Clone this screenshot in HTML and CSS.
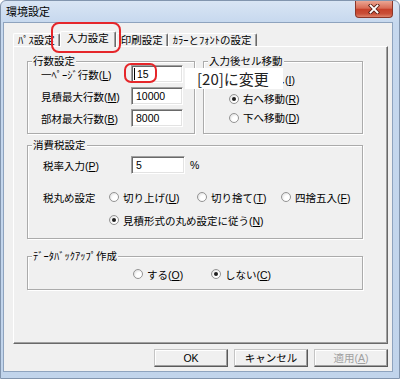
FILE: index.html
```html
<!DOCTYPE html>
<html lang="ja">
<head>
  <meta charset="UTF-8">
  <title>環境設定</title>
  <link rel="stylesheet" href="styles.css">
</head>
<body>
  <div class="window">

    <!-- title bar -->
    <div class="titlebar">
      <span class="title">環境設定</span>
      <span class="close">
        <svg width="12" height="10" viewBox="0 0 12 10">
          <path d="M2.5 1.5 L9.5 8.5 M9.5 1.5 L2.5 8.5" stroke="#5b2219" stroke-width="3.6" stroke-linecap="square"/>
          <path d="M2.5 1.5 L9.5 8.5 M9.5 1.5 L2.5 8.5" stroke="#fff" stroke-width="1.8" stroke-linecap="square"/>
        </svg>
      </span>
    </div>

    <div class="client">
      <div class="tabs">
        <div class="tab">ﾊﾟｽ設定</div>
        <div class="tab selected">入力設定</div>
        <div class="tab">印刷設定</div>
        <div class="tab">ｶﾗｰとﾌｫﾝﾄの設定</div>
      </div>

      <div class="panel">
        <div class="top-row">
          <fieldset class="group lines">
            <legend>行数設定</legend>
            <div class="group-body">
              <div class="field-row">
                <span class="label">一ﾍﾟｰｼﾞ行数(<u>L</u>)</span>
                <span class="field"><span class="caret"></span>15</span>
              </div>
              <div class="field-row">
                <span class="label">見積最大行数(<u>M</u>)</span>
                <span class="field">10000</span>
              </div>
              <div class="field-row">
                <span class="label">部材最大行数(<u>B</u>)</span>
                <span class="field">8000</span>
              </div>
            </div>
          </fieldset>

          <fieldset class="group move">
            <legend>入力後セル移動</legend>
            <div class="group-body">
              <div class="radio-row"><span class="option"><span class="dot"></span><span>移動なし(<u>I</u>)</span></span></div>
              <div class="radio-row"><span class="option"><span class="dot on"></span><span>右へ移動(<u>R</u>)</span></span></div>
              <div class="radio-row"><span class="option"><span class="dot"></span><span>下へ移動(<u>D</u>)</span></span></div>
            </div>
          </fieldset>
        </div>

        <fieldset class="group tax">
          <legend>消費税設定</legend>
          <div class="group-body">
            <div class="field-row">
              <span class="label">税率入力(<u>P</u>)</span>
              <span class="field">5</span>
              <span class="unit">%</span>
            </div>
            <div class="radio-row round">
              <span class="label">税丸め設定</span>
              <div class="choices">
                <span class="option"><span class="dot"></span><span>切り上げ(<u>U</u>)</span></span>
                <span class="option"><span class="dot"></span><span>切り捨て(<u>T</u>)</span></span>
                <span class="option"><span class="dot"></span><span>四捨五入(<u>F</u>)</span></span>
              </div>
            </div>
            <div class="radio-row follow">
              <span class="option"><span class="dot on"></span><span>見積形式の丸め設定に従う(<u>N</u>)</span></span>
            </div>
          </div>
        </fieldset>

        <fieldset class="group backup">
          <legend>ﾃﾞｰﾀﾊﾞｯｸｱｯﾌﾟ作成</legend>
          <div class="group-body">
            <div class="radio-row">
              <span class="option first"><span class="dot"></span><span>する(<u>O</u>)</span></span>
              <span class="option"><span class="dot on"></span><span>しない(<u>C</u>)</span></span>
            </div>
          </div>
        </fieldset>
      </div>

      <div class="buttons">
        <span class="button">OK</span>
        <span class="button">キャンセル</span>
        <span class="button disabled">適用(<u>A</u>)</span>
      </div>
    </div>

    <!-- annotations -->
    <div class="mark mark-tab"></div>
    <div class="mark mark-field"></div>
    <div class="note">[20]に変更</div>
  </div>
</body>
</html>
```

FILE: styles.css
```css
body {
  margin: 0;
  font-family: "Liberation Sans", "Noto Sans CJK JP", sans-serif;
  font-size: 10.5px;
  color: #000;
  background: #fff;
}

.window {
  position: relative;
  width: 400px;
  height: 379px;
  box-sizing: border-box;
  border: 1px solid #8295ae;
  border-radius: 6px 6px 0 0;
  background: linear-gradient(#d9e5f4, #c6d8ee 22px, #c1d4eb);
  display: flex;
  flex-direction: column;
}

/* title bar */
.titlebar {
  height: 21px;
  display: flex;
  justify-content: space-between;
  align-items: flex-start;
}

.title {
  padding-left: 5px;
  font-size: 11px;
  line-height: 22px;
}

.close {
  width: 38px;
  height: 17px;
  margin-right: 6px;
  box-sizing: border-box;
  border: 1px solid #8c3628;
  border-top: none;
  border-radius: 0 0 4px 4px;
  background: linear-gradient(#eba693, #d86b55 45%, #c6412a 52%, #c94f38 80%, #de836b);
  display: flex;
  align-items: center;
  justify-content: center;
}

.client {
  flex: 1;
  margin: 0 6px 6px 2px;
  border: 1px solid #8ea3be;
  background: #f0f0f0;
  padding: 8px 4px 4px 9px;
  display: flex;
  flex-direction: column;
}

/* tabs */
.tabs {
  display: flex;
  align-items: flex-end;
  height: 15px;
}

.tab {
  height: 13px;
  box-sizing: border-box;
  padding: 0 4px;
  border: 1px solid #fff;
  border-right-color: #696969;
  border-bottom: none;
  border-radius: 2px 2px 0 0;
  box-shadow: inset -1px 0 #a0a0a0;
  line-height: 12px;
  white-space: nowrap;
}

.tab.selected {
  height: 16px;
  padding: 0 6px;
  margin-bottom: -1px;
  background: #f0f0f0;
  z-index: 1;
}

.panel {
  height: 298px;
  box-sizing: border-box;
  border: 1px solid;
  border-color: #fff #696969 #696969 #fff;
  box-shadow: inset -1px -1px #a0a0a0;
  padding: 10px 24px 0 13px;
}

/* group boxes */
.top-row {
  display: flex;
  gap: 8px;
}

.group {
  margin: 0;
  padding: 0;
  min-width: 0;
  border: 1px solid #ababab;
  box-shadow: inset 1px 1px #fff, 1px 1px #fff;
}

.group legend {
  margin-left: 4px;
  padding: 0 1px;
  line-height: 8px;
  background: #f0f0f0;
}

.lines {
  width: 168px;
  box-sizing: border-box;
}

.lines .group-body {
  padding: 0 0 6px 13px;
  display: flex;
  flex-direction: column;
  gap: 4px;
}

.move {
  flex: 1;
}

.move .group-body {
  padding: 5px 0 6px 25px;
}

.move .radio-row {
  height: 19px;
}

.tax {
  margin-top: 7px;
}

.tax .group-body {
  padding: 7px 0 9px 15px;
}

.tax .label {
  width: 88px;
}

.tax .round {
  margin-top: 14px;
}

.tax .round .label {
  width: 66px;
}

.tax .follow {
  margin-top: 5px;
  padding-left: 66px;
}

.choices {
  display: grid;
  grid-template-columns: 88px 84px auto;
}

.backup {
  margin-top: 13px;
}

.backup .group-body {
  padding: 5px 0 6px 105px;
}

.backup .first {
  width: 78px;
}

/* rows and controls */
.field-row,
.radio-row {
  display: flex;
  align-items: center;
  height: 18px;
  white-space: nowrap;
}

.label {
  width: 90px;
}

.field {
  width: 52px;
  height: 18px;
  box-sizing: border-box;
  padding-left: 4px;
  background: #fff;
  border: 1px solid;
  border-color: #a0a0a0 #fff #fff #a0a0a0;
  box-shadow: inset 1px 1px #696969, inset -1px -1px #e3e3e3;
  display: flex;
  align-items: center;
}

.tax .field {
  width: 54px;
}

.caret {
  width: 1px;
  height: 12px;
  background: #000;
  margin: 0 2px 0 -2px;
}

.unit {
  margin-left: 5px;
}

.option {
  display: inline-flex;
  align-items: center;
  gap: 4px;
}

.dot {
  width: 10px;
  height: 10px;
  box-sizing: border-box;
  border-radius: 50%;
  border: 1px solid #949494;
  background: radial-gradient(circle at 65% 65%, #fff 35%, #d4d4d4 100%);
  display: flex;
  align-items: center;
  justify-content: center;
}

.dot.on::after {
  content: "";
  width: 4px;
  height: 4px;
  border-radius: 50%;
  background: #1e1e1e;
}

/* dialog buttons */
.buttons {
  display: flex;
  justify-content: flex-end;
  gap: 6px;
  margin-top: 5px;
}

.button {
  width: 74px;
  height: 18px;
  box-sizing: border-box;
  border: 1px solid;
  border-color: #c4c4c4 #5a5a5a #5a5a5a #c4c4c4;
  box-shadow: inset -1px -1px #a0a0a0, inset 1px 1px #fff;
  text-align: center;
  line-height: 16px;
}

.button.disabled {
  color: #a0a0a0;
}

/* annotations drawn over the screenshot */
.mark {
  position: absolute;
  box-sizing: border-box;
  border: 2px solid #e5262a;
}

.mark-tab {
  left: 50px;
  top: 21px;
  width: 70px;
  height: 31px;
  border-radius: 8px;
}

.mark-field {
  left: 123px;
  top: 62px;
  width: 33px;
  height: 20px;
  border-radius: 7px;
}

.note {
  position: absolute;
  left: 184px;
  top: 67px;
  width: 98px;
  height: 21px;
  box-sizing: border-box;
  padding-left: 12px;
  background: #fff;
  color: #222;
  font-family: "Noto Sans CJK JP", sans-serif;
  font-size: 15px;
  line-height: 21px;
}
```
